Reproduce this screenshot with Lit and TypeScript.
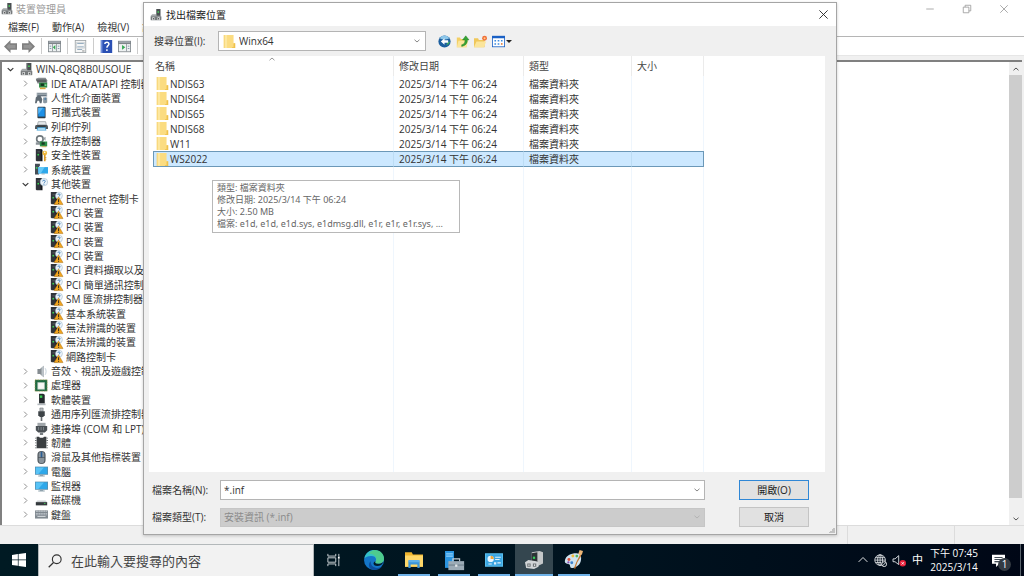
import { LitElement, html, svg, css, TemplateResult, SVGTemplateResult } from "lit";
import { customElement, property } from "lit/decorators.js";
import { classMap } from "lit/directives/class-map.js";

const tower = svg`
  <path d="M1 0h6l2 1v14H2l-1-1z" fill="#30343a"/><path d="M7 0l2 1v14l-2-1z" fill="#15181c"/>
  <path d="M3 3h3v1H3z" fill="#5a626a"/><path d="M3 6h2v2H3z" fill="#39d353"/>`;

const machine = svg`
  <path d="M8 0h6v11H8z" fill="#4b4f52"/><path d="M8 0h1v11H8z" fill="#8b9092"/>
  <path d="M10 3h2v2h-2z" fill="#47d65c"/>
  <path d="M1 9l2-2h5v2h6l1 1v4H1z" fill="#a4a8aa"/><path d="M1 10h14v5H1z" fill="#777b7d"/>
  <path d="M3 11h3v4H3zM10 11h3v4h-3z" fill="#dfe1e2"/><path d="M4 12h1v2H4zM11 12h1v2h-1z" fill="#333"/>`;

const monitor = svg`
  <path d="M0 2h16v10H0z" fill="#5a8fae"/><path d="M1 3h14v8H1z" fill="#2fa8ea"/>
  <path d="M1 3h10L4 11H1z" fill="#58c3f6"/><path d="M6 12h4v1H6zM4 13h8v1H4z" fill="#8fa3ae"/>`;

const ICONS: Record<string, SVGTemplateResult> = {
  machine,
  ide: svg`<path d="M1 2l3-1h9l2 3v4H3z" fill="#888d90"/><path d="M1 3h13v3H3z" fill="#5b5f62"/>
    <path d="M5 7h10v6H5z" fill="#2d8a45"/><path d="M7 8h4v3H7z" fill="#17351f"/><path d="M6 13h7v2H6z" fill="#d3a43a"/><path d="M12 9h2v2h-2z" fill="#8fd19e"/>`,
  hid: svg`<path d="M2 2h13v5H2z" fill="#a9b2b9"/><path d="M3 3h11v1H3zM3 5h11v1H3z" fill="#667480"/>
    <path d="M1 8l2-2h4l2 4-1 5H6l-1-3H3l-1 3H0z" fill="#5f6a73"/><path d="M10 8h5v6l-2 1h-2l-1-1z" fill="#8a98a3"/><path d="M12 8h1v3h-1z" fill="#2f6fa5"/>`,
  portable: svg`<rect x="3" y="1" width="10" height="14" rx="1" fill="#2e3b45"/><path d="M4 2h8v11H4z" fill="#1e90e6"/><path d="M4 2h6L4 10z" fill="#55b5f5"/>`,
  printer: svg`<path d="M4 2h9l1 4H3z" fill="#e4e8ea" stroke="#8b9296" stroke-width=".8"/><path d="M1 6h14l1 2v3H0V8z" fill="#51595e"/>
    <path d="M3 7h10v1H3z" fill="#1f2529"/><path d="M3 9h10l1 4H2z" fill="#3fa0d8"/><path d="M4 10h8l1 2H3z" fill="#c8e8f8"/>`,
  storage: svg`<circle cx="6" cy="5" r="4" fill="none" stroke="#6f787d" stroke-width="2"/><path d="M1 9h7v3H1z" fill="#8b9398"/>
    <path d="M6 8h9v6H6z" fill="#2f8f48"/><path d="M8 9h4v3H8z" fill="#1b3b22"/><path d="M8 14h6v1H8z" fill="#d0a33c"/><path d="M10 4l3-2v5z" fill="#9aa3a8"/>`,
  security: svg`${tower}<circle cx="12" cy="5" r="3" fill="#f0b93a"/><path d="M11 7h2v8h-2zM13 10h1v1h-1zM13 12h1v1h-1z" fill="#d99722"/><circle cx="12" cy="4" r="1" fill="#fff"/>`,
  system: svg`<path d="M0 1h6v3H0zM0 4h5v10H0z" fill="#454e56"/><path d="M1 5h2v2H1z" fill="#48d15e"/><path d="M4 5h12v8H4z" fill="#2fa8ea"/>
    <path d="M4 5h8l-5 8H4z" fill="#65c8f7"/><path d="M8 13h4v1H8z" fill="#8fa3ae"/>`,
  other: svg`${tower}<circle cx="11" cy="5" r="4.6" fill="#edf4fa" stroke="#9eb6c9" stroke-width=".7"/>
    <path d="M9.400 4.200c0-2 3.200-2 3.200-.1 0 1.300-1.600 1.200-1.600 2.500M11 7.300v1" fill="none" stroke="#3577b5" stroke-width="1.100"/>`,
  unknown: svg`${tower}<circle cx="11" cy="4.500" r="4.300" fill="#edf4fa" stroke="#9eb6c9" stroke-width=".7"/>
    <path d="M9.700 3.500c0-1.700 2.700-1.700 2.700 0 0 1-1.400 1-1.400 2" fill="none" stroke="#3577b5" stroke-width="1.100"/>
    <path d="M10.500 6L16 15.500H5z" fill="#f2a51f" stroke="#a86b0b" stroke-width=".6"/><path d="M10 9h1.200v3.300H10zM10 13.200h1.200v1.200H10z" fill="#222"/>`,
  audio: svg`<path d="M3 5h3l5-4v14l-5-4H3z" fill="#858c91"/><path d="M8 3l3-2v14l-3-2z" fill="#bcc3c8"/><path d="M12.500 4c1.500 2 1.500 6 0 8" fill="none" stroke="#b7c6d1"/>`,
  cpu: svg`<path d="M0 1h15v14H0z" fill="#1f6b45"/><path d="M0 1h15v14H0z" fill="none" stroke="#b3a25a" stroke-dasharray="1 1"/><path d="M3 4h9v9H3z" fill="#cfd6cf"/><path d="M4 5h7v7H4z" fill="#f7f8f6"/>`,
  software: svg`<path d="M5 1h5l2 1v11H5z" fill="#23282c"/><path d="M6 3h3v3H6z" fill="#35c94f"/><path d="M3 13h10v2H3z" fill="#b3b9bd"/>`,
  usb: svg`<path d="M6 0h4v4H6z" fill="#b7bcc0" stroke="#6c7276" stroke-width=".7"/><path d="M4 4h8v5l-2 2H6L4 9z" fill="#3d4347"/><path d="M7 11h2v5H7z" fill="#666c70"/>`,
  port: svg`<path d="M3 1h10v4H3z" fill="#a2a8ac"/><path d="M1 5h14v5l-3 3H4l-3-3z" fill="#4b5156"/><path d="M4 6h1v4H4zM7 6h1v4H7zM10 6h1v4h-1z" fill="#858d92"/><path d="M6 13h4v3H6z" fill="#777d81"/>`,
  firmware: svg`<path d="M2 1h3l1 1h4l1-1h3v14H2z" fill="#3a3e41"/><path d="M0 2h2v1H0zM0 5h2v1H0zM0 8h2v1H0zM0 11h2v1H0zM14 2h2v1h-2zM14 5h2v1h-2zM14 8h2v1h-2zM14 11h2v1h-2zM0 14h2v1H0zM14 14h2v1h-2z" fill="#6d7276"/>`,
  mouse: svg`<rect x="3" y="0" width="10" height="16" rx="5" fill="#4f565c"/><rect x="4.500" y="1" width="7" height="14" rx="3.500" fill="#89939b"/><path d="M7 1h2v7H7z" fill="#2a5f96"/><path d="M4 8h8" stroke="#3b4248" stroke-width=".7"/>`,
  computer: monitor,
  monitor,
  disk: svg`<path d="M3 8h10l2 2H1z" fill="#cdd2d5"/><path d="M1 10h14v4H1z" fill="#34393d"/><path d="M11 11h2v1h-2z" fill="#47d65c"/>`,
  keyboard: svg`<path d="M0 3h16v10H0z" fill="#808990"/><path d="M1 4h14v1H1zM1 6h14v1H1zM1 8h14v1H1z" fill="#c5ccd1"/><path d="M3 10h10v1H3z" fill="#dfe4e7"/><path d="M4 3v6M7 3v6M10 3v6M13 3v6" stroke="#808990" stroke-width=".6"/>`,
  folder: svg`<path d="M1 0h12v10h2v6H1z" fill="#fbdc81"/><path d="M1 0h1v16H1z" fill="#f3cb5f"/><path d="M2 0h3v16H2z" fill="#fde79f"/><path d="M13 10h2v6h-4v-1h2z" fill="#efc14a"/>`,
  back: svg`<path d="M8 0L0 8l8 8v-4h8V4H8z" fill="#808080"/><path d="M7 4L3 8l4 4v-2h7V6H7z" fill="#959595"/>`,
  forward: svg`<path d="M8 0l8 8-8 8v-4H0V4h8z" fill="#808080"/><path d="M9 4l4 4-4 4v-2H2V6h7z" fill="#959595"/>`,
  panel: svg`<path d="M0 1h16v14H0z" fill="#7e858a"/><path d="M1 5h14v9H1z" fill="#eef1f2"/><path d="M1 2h14v1H1z" fill="#c7cfd6"/><path d="M5 5h1v9H5zM10 5h1v9h-1z" fill="#8b9399"/><path d="M9 6v6L6 9z" fill="#34a853"/><path d="M2 7h2v1H2zM2 10h2v1H2zM12 7h2v1h-2zM12 10h2v1h-2z" fill="#65809b"/>`,
  props: svg`<path d="M1 0h14v16H1z" fill="#9ba1a5"/><path d="M2 1h12v14H2z" fill="#f5f6f6"/><path d="M4 4h8v1H4zM4 8h8v1H4zM4 11h6v1H4z" fill="#7896b0"/><path d="M3 3h10v7H3z" fill="none" stroke="#b9c0c5" stroke-width=".7"/><path d="M10 13h3v1h-3z" fill="#777"/>`,
  help: svg`<path d="M1 0h14v16H1z" fill="#2a50b4"/><path d="M1 0h2v16H1z" fill="#7390dc"/><path d="M6 5c0-3 5-3 5 0 0 2-2.500 2-2.500 4.500M8.500 11.500v2" fill="none" stroke="#fff" stroke-width="1.800"/>`,
  action: svg`<path d="M0 1h16v14H0z" fill="#7e858a"/><path d="M1 5h14v9H1z" fill="#eef1f2"/><path d="M1 2h14v1H1z" fill="#c7cfd6"/><path d="M10 5h1v9h-1z" fill="#8b9399"/><path d="M5 6v6l4-3z" fill="#34a853"/><path d="M12 7h2v1h-2zM12 10h2v1h-2z" fill="#65809b"/>`,
  globeBack: svg`<circle cx="8" cy="8" r="7.500" fill="#1c5f9f"/><path d="M2 4a7 7 0 0 1 12 0c-4 2-8 2-12 0z" fill="#8cc6ea"/><path d="M10 13a7 7 0 0 0 5-5l-3 1z" fill="#3fa85a"/><path d="M8 4L3.500 8 8 12V9.500h4.500v-3H8z" fill="#fff"/>`,
  up: svg`<path d="M1 3h4l1 2h7v10H1z" fill="#f3cf64"/><path d="M3 7h12l-2 8H1z" fill="#fbe59b"/><path d="M7 12c4-1 4-4 4-6H8l4-5 4 5h-2c0 4-2 7-7 8z" fill="#35a335" stroke="#1d7a1d" stroke-width=".5"/>`,
  newFolder: svg`<path d="M0 4h5l1 2h7v9H0z" fill="#f0c75a"/><path d="M3 8h12l-3 7H0z" fill="#fbe59b"/><circle cx="13" cy="4" r="3" fill="#f0703a"/><circle cx="13" cy="4" r="1.200" fill="#ffd08a"/>`,
  views: svg`<path d="M0 1h16v14H0z" fill="#1b61c5"/><path d="M1 4h14v10H1z" fill="#fff"/><path d="M3 6h2v2H3zM7 6h2v2H7zM11 6h2v2h-2zM3 10h2v2H3zM7 10h2v2H7z" fill="#3c8be0"/><path d="M11 10h2v2h-2z" fill="#e17c3a"/>`,
  close: svg`<path d="M2 2l12 12M14 2L2 14" stroke="currentColor" stroke-width="1.300" fill="none"/>`,
  minimize: svg`<path d="M2 8h12" stroke="currentColor" stroke-width="1.300"/>`,
  restore: svg`<path d="M2 5h9v9H2zM5 5V2h9v9h-3" stroke="currentColor" stroke-width="1.300" fill="none"/>`,
  right: svg`<path d="M5.500 3l5 5-5 5" stroke="#8c8c8c" stroke-width="1.700" fill="none"/>`,
  down: svg`<path d="M3 5.500L8 10l5-4.500" stroke="currentColor" stroke-width="2" fill="none"/>`,
  upChevron: svg`<path d="M3 10.500L8 6l5 4.500" stroke="currentColor" stroke-width="2" fill="none"/>`,
  trayUp: svg`<path d="M1 11l7-7 7 7" stroke="currentColor" stroke-width="1.400" fill="none"/>`,
  windows: svg`<path d="M0 2.200l6.700-1v6.300H0zM7.500 1.100L16 0v7.500H7.500zM0 8.300h6.700v6.400L0 13.800zM7.500 8.300H16V16l-8.500-1.200z" fill="#fff"/>`,
  search: svg`<circle cx="10" cy="6" r="5" fill="none" stroke="#333" stroke-width="1.300"/><path d="M6.300 9.700L0.800 15.200" stroke="#333" stroke-width="1.400"/>`,
  taskView: svg`<path d="M1 1v2.500h9V1M1 15v-2.500h9V15M1 5.500h9v5H1zM13.500 1v2.500M13.500 7v8" stroke="#ccd3d6" stroke-width="1.100" fill="none"/><path d="M12.500 4h2v2.500h-2z" fill="#fff"/>`,
  edge: svg`<circle cx="8" cy="8" r="8" fill="#1476c8"/><path d="M.3 7C1 2 5 0 8.500 0 13 0 16 3.500 16 7c0 3-2.500 4-5 4-2 0-2.500-1-1.700-2 .8-1.300.3-3.500-2-4C4.500 4.500 1.500 5 .3 7z" fill="#35c1c9"/>
    <path d="M9 0c5 .5 7 4 7 7 0 3-2.500 4-5 4-2 0-2.500-1-1.700-2C11 7 9 3 4 3c1-2 3-3 5-3z" fill="#57ce79" opacity=".75"/>
    <path d="M5.500 9c-.6 3 2 5.300 5 5.300 1.500 0 3-.5 4-1.300-1.500 2.200-4 3-6.500 3C4 16 2.500 11 5.500 9z" fill="#0d4f9e"/><path d="M9.300 9c-.8 1-.3 2 1.700 2 1.700 0 3.300-.5 4.300-1.500-.5 2-2.300 3.300-4.800 3.300-3 0-4-2.800-1.200-3.800z" fill="#031c2b"/>`,
  explorer: svg`<path d="M0 1h6l1 2h9v11H0z" fill="#f0b52e"/><path d="M0 4h16v10H0z" fill="#ffd869"/><path d="M3 9h10v6h-2v-3H5v3H3z" fill="#3b95d9"/><path d="M3 8h10v2H3z" fill="#5fb1e8"/>`,
  server: svg`<path d="M0 0h8v15H0z" fill="#2b94df"/><path d="M1 2h6v1H1zM1 4h6v1H1z" fill="#8fd0fb"/><path d="M3 9h14v8H3z" fill="#9cabb6"/><path d="M7 9V7h6v2" fill="none" stroke="#c3ccd2"/><path d="M3 12h14v1H3z" fill="#71838f"/><path d="M9 12h2v2H9z" fill="#e4e8eb"/>`,
  control: svg`<path d="M0 2h16v12H0z" fill="#58bff0"/><path d="M1 3h14v10H1z" fill="#3aa4e1"/><circle cx="5" cy="7" r="2.800" fill="#e8f6ff"/><path d="M5 7V4.200A2.800 2.800 0 0 1 7.800 7z" fill="#f0a63b"/><path d="M9 5h5v1H9zM9 7h4v1H9zM3 11h3v1H3zM8 10h2v2H8zM11 10h3v1h-3z" fill="#dff2fd"/>`,
  deviceTask: svg`<path d="M6 1l7-1 3 1v10l-6 3-4-2z" fill="#c4c7c8"/><path d="M6 2l5-1v9l-5 1z" fill="#2c3235"/><path d="M7 5h2v2H7z" fill="#35cf58"/><path d="M0 10l3-2 7 1 2 1v4l-4 2-7-1z" fill="#d2d5d7"/><path d="M2 11h3v3H2zM7 11h3v3H7z" fill="#6d7376"/><path d="M3 12h1v1H3zM8 12h1v1H8z" fill="#fff"/>`,
  paint: svg`<path d="M0 8C1 4 5 2 10 2c4 0 5 3 4 7s-5 6-8 6c-2 0-1-2-2-3s-5 0-4-4z" fill="#cfe3ef"/><circle cx="3.500" cy="7.500" r="1.300" fill="#e0533d"/><circle cx="7" cy="4.500" r="1.300" fill="#f2ba3b"/><circle cx="6" cy="10.500" r="1.300" fill="#3f83cd"/><circle cx="3" cy="10" r="1" fill="#8a4fb8"/><circle cx="10.500" cy="4.500" r="1.200" fill="#52b45f"/><path d="M15 1l-1 4-3 5-2 6-1-1 2-5 3-6z" fill="#c97a32"/><path d="M13-1l3 1-1 3-2 1-1-2z" fill="#edb778"/>`,
  globe: svg`<circle cx="7.500" cy="7.500" r="6.500" fill="none" stroke="#e6eaec"/><ellipse cx="7.500" cy="7.500" rx="3" ry="6.500" fill="none" stroke="#e6eaec"/><path d="M1 7.500h13M2 4.500h11M2 10.500h7M7.500 1v13" stroke="#e6eaec" fill="none"/><circle cx="12.500" cy="12.500" r="3" fill="#000e1b" stroke="#fff"/><path d="M10.500 14.500l4-4" stroke="#fff"/>`,
  volume: svg`<path d="M0 6h2.500L7 2v11L2.500 9.500H0z" fill="none" stroke="#e0e5e8" stroke-width="1.100"/><circle cx="12" cy="11.500" r="4" fill="#e8203a"/><path d="M10.500 10l3 3M13.500 10l-3 3" stroke="#fff"/>`,
  notify: svg`<path d="M0 1h16v11H9l-4 4v-4H0z" fill="#fff"/><path d="M3 4h10v1H3zM3 6.500h10v1H3zM3 9h7v1H3z" fill="#04121f"/>`,
};

@customElement("ui-icon")
export class UiIcon extends LitElement {
  static styles = css`
    :host { display: inline-flex; flex: none; width: 12px; height: 12px; }
    svg { width: 100%; height: 100%; display: block; overflow: visible; }
  `;
  @property() name = "";
  render() {
    return html`<svg viewBox="0 0 16 16" aria-hidden="true">${ICONS[this.name]}</svg>`;
  }
}

const icon = (name: string, cls = ""): TemplateResult => html`<ui-icon class=${cls} name=${name}></ui-icon>`;

type Node = { level: number; icon: string; label: string; open?: boolean };

const unknown = (label: string): Node => ({ level: 2, icon: "unknown", label });
const group = (icon: string, label: string, open = false): Node => ({ level: 1, icon, label, open });

const TREE: Node[] = [
  { level: 0, icon: "machine", label: "WIN-Q8Q8B0USOUE", open: true },
  group("ide", "IDE ATA/ATAPI 控制器"),
  group("hid", "人性化介面裝置"),
  group("portable", "可攜式裝置"),
  group("printer", "列印佇列"),
  group("storage", "存放控制器"),
  group("security", "安全性裝置"),
  group("system", "系統裝置"),
  group("other", "其他裝置", true),
  unknown("Ethernet 控制卡"),
  unknown("PCI 裝置"),
  unknown("PCI 裝置"),
  unknown("PCI 裝置"),
  unknown("PCI 裝置"),
  unknown("PCI 資料擷取以及訊號處理控制器"),
  unknown("PCI 簡單通訊控制器"),
  unknown("SM 匯流排控制器"),
  unknown("基本系統裝置"),
  unknown("無法辨識的裝置"),
  unknown("無法辨識的裝置"),
  unknown("網路控制卡"),
  group("audio", "音效、視訊及遊戲控制器"),
  group("cpu", "處理器"),
  group("software", "軟體裝置"),
  group("usb", "通用序列匯流排控制器"),
  group("port", "連接埠 (COM 和 LPT)"),
  group("firmware", "韌體"),
  group("mouse", "滑鼠及其他指標裝置"),
  group("computer", "電腦"),
  group("monitor", "監視器"),
  group("disk", "磁碟機"),
  group("keyboard", "鍵盤"),
];

const base = css`
  * { box-sizing: border-box; }
  button, input, select { font: inherit; color: inherit; margin: 0; padding: 0; border: 0; background: none; border-radius: 0; }
  button { display: inline-flex; align-items: center; justify-content: center; white-space: nowrap; }
  input, select { min-width: 0; outline: none; appearance: none; }
`;

@customElement("device-manager")
export class DeviceManager extends LitElement {
  static styles = [base, css`
    :host { display: flex; flex-direction: column; background: #f0f0f0; }
    .title { display: flex; align-items: center; gap: 3px; height: 18px; padding: 0 3px 0 1px; background: #fff; color: #999; }
    .title .caption { flex: 1; }
    .title button { width: 34px; height: 18px; }
    .title ui-icon.small { width: 10px; height: 10px; }
    .menu { display: flex; gap: 13px; height: 19px; padding-left: 8px; background: #fff; border-bottom: 1px solid #b5b5b5; }
    .tools { display: flex; align-items: center; height: 19px; padding-left: 4px; gap: 5px; background: #fff; border-bottom: 1px solid #e6e6e6; }
    .tools ui-icon { width: 13px; height: 13px; }
    .sep { width: 1px; height: 16px; margin: 0 1px; background: #ccc; }
    .body { display: flex; flex: 1; min-height: 0; margin: 4px 2px 0 0; border-top: 2px solid #808080; border-left: 2px solid #808080; background: #fff; }
    .tree { display: flex; flex-direction: column; flex: 1; min-width: 0; margin: 0; padding: 0 0 3px 1px; list-style: none; }
    .node { display: flex; flex: 1; align-items: center; gap: 3px; min-height: 0; line-height: 14px; white-space: nowrap; }
    .level1 { padding-left: 15px; }
    .level2 { padding-left: 30px; }
    .node .twist { width: 14px; height: 12px; }
    .twist ui-icon { width: 9px; height: 9px; }
    .node > ui-icon { width: 13px; height: 13px; }
    .scroll { display: flex; flex-direction: column; width: 13px; background: #f0f0f0; color: #555; }
    .scroll button { height: 13px; }
    .scroll ui-icon { width: 8px; height: 8px; }
    .track { flex: 1; padding-bottom: 14px; display: flex; }
    .thumb { flex: 1; background: #cdcdcd; }
    .status { display: flex; justify-content: flex-end; height: 19px; border-top: 1px solid #dcdcdc; }
    .status span { border-left: 1px solid #dcdcdc; width: 107px; }
    .status .last { width: 70px; }
  `];
  render() {
    return html`
      <div class="title">${icon("machine")}<span class="caption">裝置管理員</span>
        <button aria-label="最小化">${icon("minimize", "small")}</button>
        <button aria-label="還原">${icon("restore", "small")}</button>
        <button aria-label="關閉">${icon("close", "small")}</button>
      </div>
      <div class="menu"><button>檔案(F)</button><button>動作(A)</button><button>檢視(V)</button><button>說明(H)</button></div>
      <div class="tools">
        <button aria-label="上一頁">${icon("back")}</button><button aria-label="下一頁">${icon("forward")}</button><span class="sep"></span>
        <button aria-label="主控台樹狀目錄">${icon("panel")}</button><span class="sep"></span>
        <button aria-label="內容">${icon("props")}</button><span class="sep"></span>
        <button aria-label="說明">${icon("help")}</button><button aria-label="動作窗格">${icon("action")}</button><span class="sep"></span>
        <button aria-label="掃描">${icon("computer")}</button>
      </div>
      <div class="body">
        <ul class="tree" role="tree">${TREE.map((n) => html`
          <li class=${classMap({ node: true, level1: n.level === 1, level2: n.level === 2 })} role="treeitem">
            ${n.level < 2
              ? html`<button class="twist" aria-label=${n.label}>${icon(n.open ? "down" : "right")}</button>`
              : html`<span class="twist"></span>`}
            ${icon(n.icon)}<span>${n.label}</span>
          </li>`)}</ul>
        <div class="scroll"><button aria-label="向上捲動">${icon("upChevron")}</button><div class="track"><div class="thumb"></div></div><button aria-label="向下捲動">${icon("down")}</button></div>
      </div>
      <div class="status"><span></span><span class="last"></span></div>`;
  }
}

@customElement("file-dialog")
export class FileDialog extends LitElement {
  static styles = [base, css`
    :host { display: flex; flex-direction: column; background: #f0f0f0; border: 1px solid #a5a5a5; box-shadow: 0 1px 3px rgba(0, 0, 0, .2); }
    .title { display: flex; align-items: center; gap: 4px; height: 23px; padding: 0 6px; background: #fff; color: #222; }
    .title .caption { flex: 1; }
    .title button { width: 14px; height: 14px; }
    .title .x { width: 11px; height: 11px; }
    .look { display: flex; align-items: center; height: 30px; padding-left: 10px; }
    .look label { width: 64px; }
    .combo { display: flex; align-items: center; background: #fff; border: 1px solid #b4b4b4; height: 20px; }
    .combo ui-icon { color: #888; }
    .combo .chev { width: 8px; height: 8px; }
    .place { width: 208px; padding: 0 4px; gap: 3px; }
    .place ui-icon { width: 13px; height: 13px; }
    .combo select, .combo input { flex: 1; height: 18px; line-height: 18px; }
    .nav { display: flex; align-items: center; gap: 5px; padding-left: 12px; }
    .nav ui-icon { width: 13px; height: 13px; }
    .views { gap: 1px; }
    .arrow { border: 3px solid transparent; border-top-color: #222; border-bottom: 0; }
    .list { position: relative; display: flex; flex: 1; min-height: 0; margin: 0 11px 0 5px; padding-left: 4px; background: #fff; }
    table { border-collapse: separate; border-spacing: 0; table-layout: fixed; width: 551px; height: 100%; }
    .c1 { width: 241px; } .c2 { width: 130px; } .c3 { width: 108px; } .c4 { width: 72px; }
    th, td { padding: 0 0 0 5px; border-right: 1px solid #eff6fd; text-align: left; font-weight: normal; white-space: nowrap; line-height: 14px; }
    th { height: 20px; color: #444; border-right-color: #ebebeb; }
    th:first-child { padding-left: 2px; }
    .sort { position: absolute; top: -1px; left: 119px; width: 8px; height: 8px; color: #999; }
    .file td { height: 15px; }
    .file td:first-child { padding-left: 3px; }
    .name { display: flex; align-items: center; gap: 1px; }
    .name ui-icon { width: 13px; height: 13px; }
    .file.selected td { height: 16px; background: #cce8ff; border-top: 1px solid #6b98b8; border-bottom: 1px solid #6b98b8; border-right-color: #bcdcf4; }
    .file.selected td:first-child { border-left: 1px solid #6b98b8; padding-left: 2px; }
    .file.selected td:last-child { border-right-color: #6b98b8; }
    .tip { position: absolute; left: 63px; top: 124px; width: 248px; padding: 1px 4px 2px; border: 1px solid #b8b8b8; background: #fff; color: #666;
      font: 9px/12px "Noto Sans", "Noto Sans CJK TC", sans-serif; white-space: nowrap; }
    .form { display: grid; grid-template-columns: 68px minmax(0, 485px) 70px; column-gap: 0; row-gap: 7px; align-items: center; padding: 8px 0 7px 8px; }
    .form button { width: 70px; height: 20px; margin-left: 34px; background: #e1e1e1; border: 1px solid #c4c4c4; color: #222; }
    .form .primary { border-color: #2f87d6; }
    .field { padding: 0 3px; }
    .disabled { background: #ccc; border-color: #c6c6c6; height: 19px; }
    .combo.disabled select { color: #8b8b8b; opacity: 1; height: 17px; line-height: 17px; }
    .disabled ui-icon { color: #b3b3b3; }
    .grip { position: absolute; right: 1px; bottom: 1px; width: 6px; height: 6px; background: linear-gradient(135deg, transparent 50%, #c2c2c2 50%); }
  `];
  render() {
    const files = ["NDIS63", "NDIS64", "NDIS65", "NDIS68", "W11", "WS2022"];
    return html`
      <div class="title">${icon("machine")}<span class="caption">找出檔案位置</span><button aria-label="關閉">${icon("close", "x")}</button></div>
      <div class="look">
        <label for="place">搜尋位置(I):</label>
        <div class="combo place">${icon("folder")}<select id="place"><option>Winx64</option></select>${icon("down", "chev")}</div>
        <div class="nav">
          <button aria-label="返回">${icon("globeBack")}</button><button aria-label="上一層">${icon("up")}</button>
          <button aria-label="新增資料夾">${icon("newFolder")}</button><button class="views" aria-label="檢視">${icon("views")}<span class="arrow"></span></button>
        </div>
      </div>
      <div class="list">
        ${icon("upChevron", "sort")}
        <table>
          <colgroup><col class="c1"><col class="c2"><col class="c3"><col class="c4"></colgroup>
          <thead><tr><th>名稱</th><th>修改日期</th><th>類型</th><th>大小</th></tr></thead>
          <tbody>
            ${files.map((f) => html`<tr class=${classMap({ file: true, selected: f === "WS2022" })}>
              <td><span class="name">${icon("folder")}${f}</span></td><td>2025/3/14 下午 06:24</td><td>檔案資料夾</td><td></td></tr>`)}
            <tr><td></td><td></td><td></td><td></td></tr>
          </tbody>
        </table>
        <div class="tip" role="tooltip">
          <div>類型: 檔案資料夾</div><div>修改日期: 2025/3/14 下午 06:24</div><div>大小: 2.50 MB</div>
          <div>檔案: e1d, e1d, e1d.sys, e1dmsg.dll, e1r, e1r, e1r.sys, ...</div>
        </div>
      </div>
      <div class="form">
        <label for="fname">檔案名稱(N):</label>
        <div class="combo field"><input id="fname" value="*.inf">${icon("down", "chev")}</div>
        <button class="primary">開啟(O)</button>
        <label for="ftype">檔案類型(T):</label>
        <div class="combo field disabled"><select id="ftype" disabled><option>安裝資訊 (*.inf)</option></select>${icon("down", "chev")}</div>
        <button>取消</button>
      </div>
      <span class="grip"></span>`;
  }
}

@customElement("task-bar")
export class TaskBar extends LitElement {
  static styles = [base, css`
    :host { display: flex; height: 32px; background: linear-gradient(90deg, #001a23, #00131f 60%, #000716); color: #fff; }
    .start { width: 38px; }
    .start ui-icon { width: 14px; height: 14px; }
    .search { display: flex; align-items: center; gap: 9px; width: 276px; padding-left: 9px; background: #f2f2f2; border: 1px solid #b3b8ba; border-bottom: 0; font-size: 13px; }
    .search ui-icon { width: 14px; height: 14px; }
    .search input { flex: 1; color: #444; }
    .search input::placeholder { color: #444; opacity: 1; }
    .app { width: 40px; border: solid transparent; border-width: 0 4px; }
    .app ui-icon { width: 18px; height: 18px; }
    .view ui-icon { width: 14px; height: 14px; }
    .edge ui-icon { width: 20px; height: 20px; }
    .running { box-shadow: inset 0 -2px #6fb2e8; }
    .app.running { width: 32px; margin: 0 4px; border: 0; }
    .app.active { width: 38px; margin: 0 1px; background: #34464f; }
    .tray { display: flex; flex: 1; justify-content: flex-end; align-items: center; gap: 6px; }
    .tray ui-icon { width: 13px; height: 13px; }
    .tray .chevron ui-icon { width: 10px; height: 10px; }
    .ime { font-size: 11px; }
    .clock { display: flex; flex-direction: column; align-items: center; width: 50px; line-height: 14px; margin: 0 5px 0 0; }
    .notes { position: relative; width: 16px; height: 20px; margin-right: 8px; }
    .badge { position: absolute; left: 8px; top: 8px; width: 13px; height: 13px; border-radius: 7px; background: #333b43; font-size: 10px; line-height: 13px; text-align: center; }
    .show { width: 4px; height: 32px; border-left: 1px solid #59636c; }
  `];
  render() {
    const apps: [string, string, string][] = [
      ["taskView", "工作檢視", "view"], ["edge", "Microsoft Edge", "edge"], ["explorer", "檔案總管", "running"],
      ["server", "伺服器管理員", "running"], ["control", "控制台", "running"], ["deviceTask", "裝置管理員", "running active"], ["paint", "小畫家", "running"],
    ];
    return html`
      <button class="start" aria-label="開始">${icon("windows")}</button>
      <div class="search">${icon("search")}<input aria-label="搜尋" placeholder="在此輸入要搜尋的內容"></div>
      ${apps.map(([i, label, cls]) => html`<button class="app ${cls}" aria-label=${label}>${icon(i)}</button>`)}
      <div class="tray">
        <button class="chevron" aria-label="顯示隱藏的圖示">${icon("trayUp")}</button>
        <button aria-label="網路">${icon("globe")}</button><button aria-label="音量">${icon("volume")}</button>
        <button class="ime">中</button>
        <button class="clock"><span>下午 07:45</span><span>2025/3/14</span></button>
        <button class="notes" aria-label="通知">${icon("notify")}<span class="badge">1</span></button>
        <button class="show" aria-label="顯示桌面"></button>
      </div>`;
  }
}

@customElement("app-root")
export class AppRoot extends LitElement {
  static styles = css`
    :host { display: flex; flex-direction: column; height: 100vh; overflow: hidden; position: relative; background: #f0f0f0; color: #333;
      font: 10px/14px "Open Sans", "Noto Sans CJK TC", sans-serif; }
    device-manager { flex: 1; min-height: 0; }
    file-dialog { position: absolute; inset: 2px 187px 41px 143px; }
  `;
  render() {
    return html`<device-manager></device-manager><file-dialog></file-dialog><task-bar></task-bar>`;
  }
}
